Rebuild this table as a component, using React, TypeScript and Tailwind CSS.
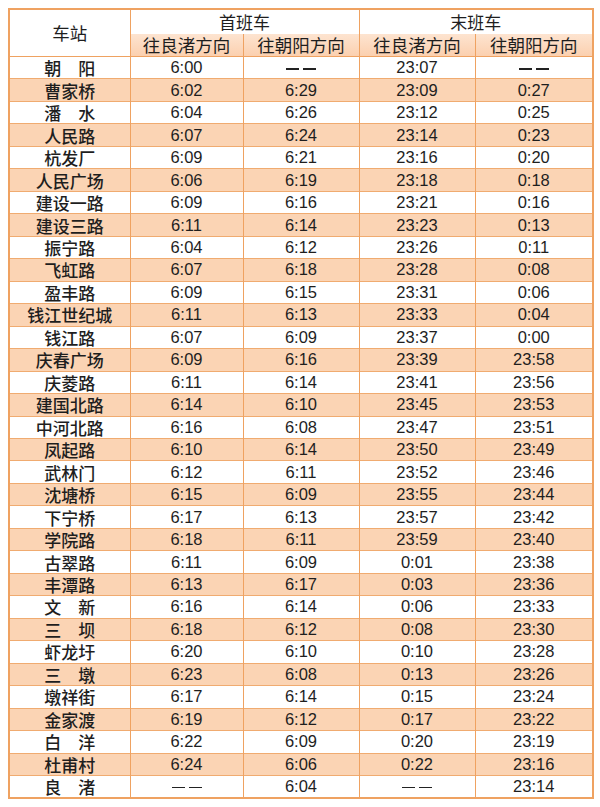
import React from "react";

const rows: [string, string, string, string, string][] = [
  ["朝　阳", "6:00", "——", "23:07", "——"],
  ["曹家桥", "6:02", "6:29", "23:09", "0:27"],
  ["潘　水", "6:04", "6:26", "23:12", "0:25"],
  ["人民路", "6:07", "6:24", "23:14", "0:23"],
  ["杭发厂", "6:09", "6:21", "23:16", "0:20"],
  ["人民广场", "6:06", "6:19", "23:18", "0:18"],
  ["建设一路", "6:09", "6:16", "23:21", "0:16"],
  ["建设三路", "6:11", "6:14", "23:23", "0:13"],
  ["振宁路", "6:04", "6:12", "23:26", "0:11"],
  ["飞虹路", "6:07", "6:18", "23:28", "0:08"],
  ["盈丰路", "6:09", "6:15", "23:31", "0:06"],
  ["钱江世纪城", "6:11", "6:13", "23:33", "0:04"],
  ["钱江路", "6:07", "6:09", "23:37", "0:00"],
  ["庆春广场", "6:09", "6:16", "23:39", "23:58"],
  ["庆菱路", "6:11", "6:14", "23:41", "23:56"],
  ["建国北路", "6:14", "6:10", "23:45", "23:53"],
  ["中河北路", "6:16", "6:08", "23:47", "23:51"],
  ["凤起路", "6:10", "6:14", "23:50", "23:49"],
  ["武林门", "6:12", "6:11", "23:52", "23:46"],
  ["沈塘桥", "6:15", "6:09", "23:55", "23:44"],
  ["下宁桥", "6:17", "6:13", "23:57", "23:42"],
  ["学院路", "6:18", "6:11", "23:59", "23:40"],
  ["古翠路", "6:11", "6:09", "0:01", "23:38"],
  ["丰潭路", "6:13", "6:17", "0:03", "23:36"],
  ["文　新", "6:16", "6:14", "0:06", "23:33"],
  ["三　坝", "6:18", "6:12", "0:08", "23:30"],
  ["虾龙圩", "6:20", "6:10", "0:10", "23:28"],
  ["三　墩", "6:23", "6:08", "0:13", "23:26"],
  ["墩祥街", "6:17", "6:14", "0:15", "23:24"],
  ["金家渡", "6:19", "6:12", "0:17", "23:22"],
  ["白　洋", "6:22", "6:09", "0:20", "23:19"],
  ["杜甫村", "6:24", "6:06", "0:22", "23:16"],
  ["良　渚", "——", "6:04", "——", "23:14"],
];

const cjk = "font-['Noto_Sans_CJK_SC',sans-serif]";
const num = "font-['Liberation_Sans',Arial,sans-serif]";

function Time({ v }: { v: string }) {
  if (v === "——") {
    return (
      <span className="inline-flex items-center gap-[4px] align-middle">
        <span className="inline-block h-[1.5px] w-[13px] bg-[#222]" />
        <span className="inline-block h-[1.5px] w-[13px] bg-[#222]" />
      </span>
    );
  }
  return <span>{v}</span>;
}

export default function App() {
  const vb = "border-l-[1.5px] border-[#efa261]";
  return (
    <div className="w-[600px] h-[807px] bg-white pt-[8px] pl-[8px]">
      <table className="table-fixed border-collapse w-[584px] border-2 border-[#efa261] text-[#1e1e1e]">
        <colgroup>
          <col className="w-[121px]" />
          <col className="w-[113px]" />
          <col className="w-[116px]" />
          <col className="w-[116px]" />
          <col className="w-[118px]" />
        </colgroup>
        <thead>
          <tr className="h-[24px]">
            <th rowSpan={2} className={`${cjk} text-[17.5px] font-normal text-center align-middle border-b border-[#efa261]`}>
              车站
            </th>
            <th colSpan={2} className={`${cjk} ${vb} text-[17px] font-normal text-center leading-[24px]`}>
              首班车
            </th>
            <th colSpan={2} className={`${cjk} ${vb} text-[17px] font-normal text-center leading-[24px]`}>
              末班车
            </th>
          </tr>
          <tr className="h-[22px] bg-gradient-to-b from-[#fde4d0] to-[#fbcfae]">
            {["往良渚方向", "往朝阳方向", "往良渚方向", "往朝阳方向"].map((t, i) => (
              <th
                key={i}
                className={`${cjk} ${vb} border-b border-[#efa261] text-[17.5px] font-normal text-center leading-[22px] p-0`}
              >
                {t}
              </th>
            ))}
          </tr>
        </thead>
        <tbody>
          {rows.map((r, i) => (
            <tr
              key={i}
              className={`h-[22.48px] ${i % 2 === 1 ? "bg-[#fbd4b4]" : "bg-white"} ${
                i < rows.length - 1 ? "border-b border-[#f0ab70]" : ""
              }`}
            >
              <td className={`${cjk} text-[17px] font-medium text-center leading-[21px] p-0`}>{r[0]}</td>
              {r.slice(1).map((v, j) => (
                <td key={j} className={`${num} ${vb} text-[16.5px] text-center leading-[21px] p-0`}>
                  <Time v={v} />
                </td>
              ))}
            </tr>
          ))}
        </tbody>
      </table>
    </div>
  );
}
